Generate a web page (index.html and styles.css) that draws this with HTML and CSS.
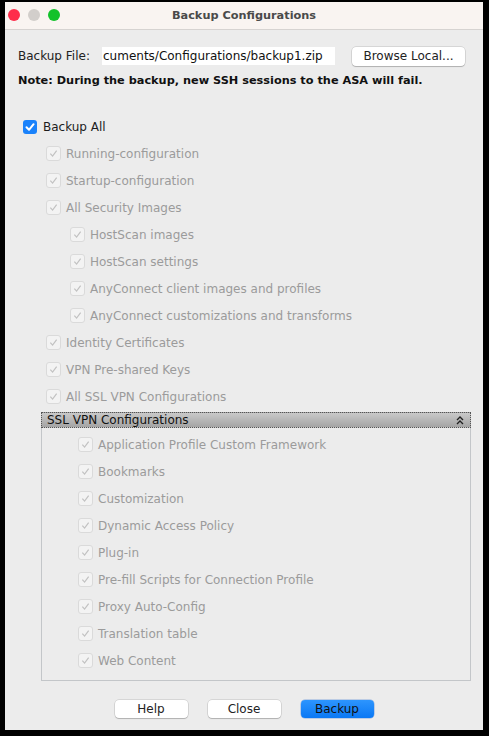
FILE: index.html
```html
<!DOCTYPE html>
<html>
<head>
<meta charset="utf-8">
<link rel="stylesheet" href="styles.css">
</head>
<body>
<div class="window">
  <div class="titlebar">
    <div class="lights">
      <span class="light red"></span>
      <span class="light grey"></span>
      <span class="light green"></span>
    </div>
    <div class="title">Backup Configurations</div>
  </div>
  <div class="content">
    <div class="file-row">
      <span class="label">Backup File:</span>
      <div class="input">cuments/Configurations/backup1.zip</div>
      <button class="btn browse">Browse Local...</button>
    </div>
    <div class="note">Note: During the backup, new SSH sessions to the ASA will fail.</div>

    <div class="list">
      <div class="row lvl0"><span class="cb on"><svg viewBox="0 0 14 14"><path d="M3.5 7.3 L6 9.8 L10.6 4.2" fill="none" stroke="#fff" stroke-width="2" stroke-linecap="round" stroke-linejoin="round"/></svg></span><span class="txt on">Backup All</span></div>
      <div class="row lvl1"><span class="cb"><svg viewBox="0 0 14 14"><path d="M3.6 7.2 L6 9.8 L10.4 3.8" fill="none" stroke="#c2c2c2" stroke-width="1.3"/></svg></span><span class="txt">Running-configuration</span></div>
      <div class="row lvl1"><span class="cb"><svg viewBox="0 0 14 14"><path d="M3.6 7.2 L6 9.8 L10.4 3.8" fill="none" stroke="#c2c2c2" stroke-width="1.3"/></svg></span><span class="txt">Startup-configuration</span></div>
      <div class="row lvl1"><span class="cb"><svg viewBox="0 0 14 14"><path d="M3.6 7.2 L6 9.8 L10.4 3.8" fill="none" stroke="#c2c2c2" stroke-width="1.3"/></svg></span><span class="txt">All Security Images</span></div>
      <div class="row lvl2"><span class="cb"><svg viewBox="0 0 14 14"><path d="M3.6 7.2 L6 9.8 L10.4 3.8" fill="none" stroke="#c2c2c2" stroke-width="1.3"/></svg></span><span class="txt">HostScan images</span></div>
      <div class="row lvl2"><span class="cb"><svg viewBox="0 0 14 14"><path d="M3.6 7.2 L6 9.8 L10.4 3.8" fill="none" stroke="#c2c2c2" stroke-width="1.3"/></svg></span><span class="txt">HostScan settings</span></div>
      <div class="row lvl2"><span class="cb"><svg viewBox="0 0 14 14"><path d="M3.6 7.2 L6 9.8 L10.4 3.8" fill="none" stroke="#c2c2c2" stroke-width="1.3"/></svg></span><span class="txt">AnyConnect client images and profiles</span></div>
      <div class="row lvl2"><span class="cb"><svg viewBox="0 0 14 14"><path d="M3.6 7.2 L6 9.8 L10.4 3.8" fill="none" stroke="#c2c2c2" stroke-width="1.3"/></svg></span><span class="txt">AnyConnect customizations and transforms</span></div>
      <div class="row lvl1"><span class="cb"><svg viewBox="0 0 14 14"><path d="M3.6 7.2 L6 9.8 L10.4 3.8" fill="none" stroke="#c2c2c2" stroke-width="1.3"/></svg></span><span class="txt">Identity Certificates</span></div>
      <div class="row lvl1"><span class="cb"><svg viewBox="0 0 14 14"><path d="M3.6 7.2 L6 9.8 L10.4 3.8" fill="none" stroke="#c2c2c2" stroke-width="1.3"/></svg></span><span class="txt">VPN Pre-shared Keys</span></div>
      <div class="row lvl1"><span class="cb"><svg viewBox="0 0 14 14"><path d="M3.6 7.2 L6 9.8 L10.4 3.8" fill="none" stroke="#c2c2c2" stroke-width="1.3"/></svg></span><span class="txt">All SSL VPN Configurations</span></div>
    </div>

    <div class="panel">
      <div class="panel-head">
        <span>SSL VPN Configurations</span>
        <svg class="collapse" viewBox="0 0 8 9"><path d="M1 4 L4 1 L7 4 M1 8 L4 5 L7 8" fill="none" stroke="#222" stroke-width="1.4"/></svg>
      </div>
      <div class="panel-body">
        <div class="row"><span class="cb"><svg viewBox="0 0 14 14"><path d="M3.6 7.2 L6 9.8 L10.4 3.8" fill="none" stroke="#c2c2c2" stroke-width="1.3"/></svg></span><span class="txt">Application Profile Custom Framework</span></div>
        <div class="row"><span class="cb"><svg viewBox="0 0 14 14"><path d="M3.6 7.2 L6 9.8 L10.4 3.8" fill="none" stroke="#c2c2c2" stroke-width="1.3"/></svg></span><span class="txt">Bookmarks</span></div>
        <div class="row"><span class="cb"><svg viewBox="0 0 14 14"><path d="M3.6 7.2 L6 9.8 L10.4 3.8" fill="none" stroke="#c2c2c2" stroke-width="1.3"/></svg></span><span class="txt">Customization</span></div>
        <div class="row"><span class="cb"><svg viewBox="0 0 14 14"><path d="M3.6 7.2 L6 9.8 L10.4 3.8" fill="none" stroke="#c2c2c2" stroke-width="1.3"/></svg></span><span class="txt">Dynamic Access Policy</span></div>
        <div class="row"><span class="cb"><svg viewBox="0 0 14 14"><path d="M3.6 7.2 L6 9.8 L10.4 3.8" fill="none" stroke="#c2c2c2" stroke-width="1.3"/></svg></span><span class="txt">Plug-in</span></div>
        <div class="row"><span class="cb"><svg viewBox="0 0 14 14"><path d="M3.6 7.2 L6 9.8 L10.4 3.8" fill="none" stroke="#c2c2c2" stroke-width="1.3"/></svg></span><span class="txt">Pre-fill Scripts for Connection Profile</span></div>
        <div class="row"><span class="cb"><svg viewBox="0 0 14 14"><path d="M3.6 7.2 L6 9.8 L10.4 3.8" fill="none" stroke="#c2c2c2" stroke-width="1.3"/></svg></span><span class="txt">Proxy Auto-Config</span></div>
        <div class="row"><span class="cb"><svg viewBox="0 0 14 14"><path d="M3.6 7.2 L6 9.8 L10.4 3.8" fill="none" stroke="#c2c2c2" stroke-width="1.3"/></svg></span><span class="txt">Translation table</span></div>
        <div class="row"><span class="cb"><svg viewBox="0 0 14 14"><path d="M3.6 7.2 L6 9.8 L10.4 3.8" fill="none" stroke="#c2c2c2" stroke-width="1.3"/></svg></span><span class="txt">Web Content</span></div>
      </div>
    </div>

    <div class="buttons">
      <button class="btn action">Help</button>
      <button class="btn action">Close</button>
      <button class="btn action primary">Backup</button>
    </div>
  </div>
</div>
</body>
</html>
```
FILE: styles.css
```css
html, body {
  margin: 0;
  padding: 0;
  background: #000;
}
body {
  width: 489px;
  height: 736px;
  overflow: hidden;
  font-family: "DejaVu Sans", "Liberation Sans", sans-serif;
  font-size: 12px;
  color: #222;
}
.window {
  margin: 2px 6px 6px 5px;
  height: 728px;
  background: #ececec;
  display: flex;
  flex-direction: column;
}
.titlebar {
  height: 27px;
  background: #f9f4f1;
  border-bottom: 1px solid #d6d3d1;
  position: relative;
  display: flex;
  align-items: center;
  justify-content: center;
}
.lights {
  position: absolute;
  left: 3px;
  top: 7px;
  display: flex;
  gap: 8px;
}
.light {
  width: 12px;
  height: 12px;
  border-radius: 50%;
  display: block;
}
.red { background: #fe2d4b; }
.grey { background: #d2cecb; }
.green { background: #12c22a; }
.title {
  font-weight: bold;
  font-size: 11.3px;
  color: #4a4a4a;
}
.content {
  flex: 1;
  padding: 16px 12px 0 13px;
  display: flex;
  flex-direction: column;
}
.file-row {
  display: flex;
  align-items: center;
  height: 20px;
}
.label {
  width: 84px;
  color: #222;
}
.input {
  width: 233px;
  height: 18px;
  background: #fff;
  line-height: 18px;
  padding-left: 1px;
  overflow: hidden;
  white-space: nowrap;
  color: #111;
  box-sizing: border-box;
}
.btn {
  font-family: inherit;
  font-size: 12px;
  background: #fff;
  border: none;
  border-radius: 4px;
  box-shadow: 0 0 0 0.5px rgba(0,0,0,0.18), 0 1px 1px rgba(0,0,0,0.18);
  color: #222;
  padding: 0;
}
.browse {
  margin-left: 17px;
  width: 113px;
  height: 19px;
}
.note {
  margin-top: 7px;
  height: 16px;
  line-height: 16px;
  font-weight: bold;
  font-size: 11.3px;
  color: #111;
}
.list {
  margin-top: 24px;
  display: flex;
  flex-direction: column;
}
.row {
  height: 27px;
  display: flex;
  align-items: center;
}
.lvl0 { padding-left: 5px; }
.lvl1 { padding-left: 28px; }
.lvl2 { padding-left: 52px; }
.cb {
  width: 13px;
  height: 13px;
  border: 1px solid #dadada;
  border-radius: 3px;
  background: #f3f3f3;
  margin-right: 5px;
  display: flex;
  flex-shrink: 0;
}
.cb svg { width: 13px; height: 13px; }
.cb.on {
  width: 14px;
  height: 14px;
  border: none;
  background: #1a82fb;
  margin-right: 6px;
}
.cb.on svg { width: 14px; height: 14px; }
.txt {
  color: #9b9b9b;
  white-space: nowrap;
}
.txt.on { color: #1c1c1c; }
.panel {
  margin-top: 2px;
  margin-left: 23px;
  width: 430px;
  border: 1px solid #c3c6c9;
  border-top: none;
  box-sizing: border-box;
}
.panel-head {
  height: 16px;
  margin: 0 -1px;
  background: linear-gradient(#c9c9c9, #a4a4a4);
  border: 1px dotted #555;
  box-sizing: border-box;
  display: flex;
  align-items: center;
  justify-content: space-between;
  padding: 0 6px 0 5px;
  font-size: 12px;
  color: #111;
}
.collapse { width: 8px; height: 9px; }
.panel-body {
  padding: 3px 0 6px 36px;
}
.buttons {
  margin-top: 19px;
  display: flex;
  justify-content: center;
  gap: 20px;
  padding-right: 1px;
}
.action {
  width: 73px;
  height: 18px;
}
.primary {
  background: linear-gradient(#2d95fe, #0a78f5);
  color: #111;
  box-shadow: 0 0 0 0.5px rgba(0,80,200,0.4);
}
```
